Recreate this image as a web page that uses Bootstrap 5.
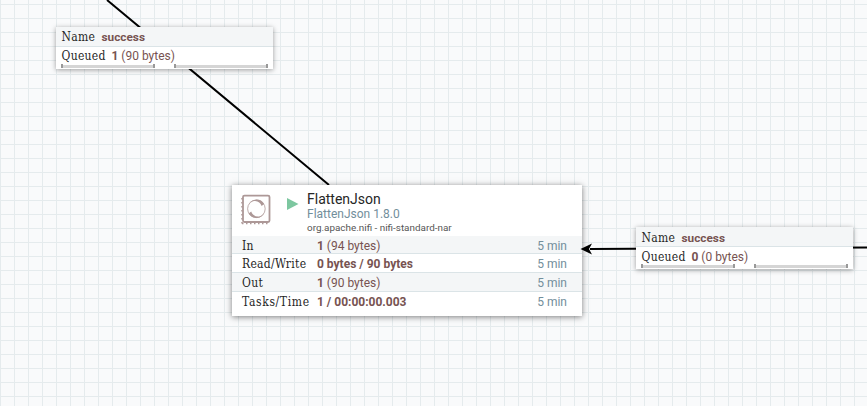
<!DOCTYPE html>
<html lang="en">
<head>
<meta charset="utf-8">
<title>NiFi Flow</title>
<link href="https://cdn.jsdelivr.net/npm/bootstrap@5.3.0/dist/css/bootstrap.min.css" rel="stylesheet">
<style>
body{font-family:Roboto,sans-serif;font-size:12px;line-height:18px;color:#775351}
.flow-canvas{width:867px;height:406px;background-color:#f9fafb;background-image:linear-gradient(90deg,#e5ebed 1px,transparent 1px),linear-gradient(#e5ebed 1px,transparent 1px);background-size:14px 14px;background-position:0 4px}
.wires{left:0;top:0}
.node-box{background:#fff;box-shadow:0 1px 5px rgba(0,0,0,.38)}
.conn{width:217px;height:42px}
.conn-a{left:56px;top:27px}
.conn-b{left:636px;top:227px}
.processor{left:232px;top:185px;width:350px;height:130.5px;box-shadow:0 1px 6px rgba(0,0,0,.5)}
.conn-row{height:20px;padding-left:5.5px;line-height:20px}
.conn-row.shade{border-bottom:1px solid #dbe4e7}
.conn-row.queue{height:17px;line-height:18px}
.conn-label{font-size:11.8px;line-height:21px}
.conn-b .conn-row{line-height:22px}
.conn-b .conn-row.queue{line-height:20px}
.conn-b .conn-label{line-height:23px}
.shade{background:#f4f6f7}
.slab{font-family:"DejaVu Serif",serif;font-stretch:condensed;font-size:12px;letter-spacing:.3px;color:#262626;white-space:nowrap}
.slab-name{width:40px}
.slab-queue{width:50px}
.gauges{padding:0 5px;gap:19px}
.gauge{width:94px;height:4px;border:solid #999;border-width:0 2px;background:linear-gradient(#d5d5d5,#d5d5d5) 0 1px/100% 3px no-repeat}
.proc-head{height:51px}
.proc-icon{margin:9px 0 0 9px}
.run-icon{margin:13px 0 0 14px}
.proc-text{margin:6px 0 0 8px}
.proc-name{font-size:14px;line-height:17px;color:#262626}
.proc-type{line-height:13px;color:#728e9b}
.proc-bundle{font-size:9.9px;line-height:14px;color:#555}
.stat{height:19px;padding:0 15px 0 10px;border-bottom:1px solid #dbe4e7;line-height:20px}
.stat-first{height:18px}
.stat:last-child{border:0}
.stat-mid{line-height:21px}
.stat .slab{width:75px}
.stat .slab-wide{letter-spacing:.65px}
.ago{color:#728e9b}
b{font-weight:700}
</style>
</head>
<body class="m-0 overflow-hidden">
<main class="flow-canvas position-relative overflow-hidden">
<svg class="wires position-absolute" width="867" height="406" fill="none" stroke="#000" stroke-width="2"><path d="M107 0 329 185M867 247.4 590 249"/></svg>

<section class="node-box conn conn-a position-absolute">
<div class="conn-row shade d-flex"><span class="slab slab-name">Name</span><b class="conn-label">success</b></div>
<div class="conn-row queue d-flex"><span class="slab slab-queue">Queued</span><span><b>1</b> (90 bytes)</span></div>
<div class="gauges d-flex"><div class="gauge"></div><div class="gauge"></div></div>
</section>

<section class="node-box conn conn-b position-absolute">
<div class="conn-row shade d-flex"><span class="slab slab-name">Name</span><b class="conn-label">success</b></div>
<div class="conn-row queue d-flex"><span class="slab slab-queue">Queued</span><span><b>0</b> (0 bytes)</span></div>
<div class="gauges d-flex"><div class="gauge"></div><div class="gauge"></div></div>
</section>

<section class="node-box processor position-absolute">
<header class="proc-head d-flex align-items-start">
<svg class="proc-icon" width="32" height="32" fill="none" stroke="#ad9897"><rect x="2" y="1.6" width="26.5" height="26.4" rx="1.5" stroke-width="1.8"/><path d="M1 4v26M1 29.5H28" stroke-width="1.5" stroke-dasharray="1.5 2.5"/><circle cx="15.4" cy="14.8" r="8.8" stroke-width=".8"/><g fill="#ad9897" stroke="none"><path d="M7 11A9.2 9.2 0 0 1 23.2 10L20.600 12A7.400 7.400 0 0 0 7 11Z"/><path d="M23.800 18.600A9.200 9.200 0 0 1 7.600 19.600L10.200 17.600A7.400 7.400 0 0 0 23.800 18.600Z"/></g></svg>
<svg class="run-icon" width="12" height="12"><path d="M0 0 11.5 6 0 12Z" fill="#7dc7a0"/></svg>
<div class="proc-text"><div class="proc-name">FlattenJson</div><div class="proc-type">FlattenJson 1.8.0</div><div class="proc-bundle">org.apache.nifi - nifi-standard-nar</div></div>
</header>
<div class="stat stat-first shade d-flex"><span class="slab">In</span><span><b>1</b> (94 bytes)</span><span class="ago ms-auto">5 min</span></div>
<div class="stat stat-mid d-flex"><span class="slab">Read/Write</span><b>0 bytes / 90 bytes</b><span class="ago ms-auto">5 min</span></div>
<div class="stat stat-mid shade d-flex"><span class="slab">Out</span><span><b>1</b> (90 bytes)</span><span class="ago ms-auto">5 min</span></div>
<div class="stat d-flex"><span class="slab slab-wide">Tasks/Time</span><b>1 / 00:00:00.003</b><span class="ago ms-auto">5 min</span></div>
</section>
<svg class="wires position-absolute" width="867" height="406"><path d="M580.5 249 592 243.5 589 249 592 254.5Z"/></svg>
</main>
<script src="https://cdn.jsdelivr.net/npm/bootstrap@5.3.0/dist/js/bootstrap.bundle.min.js"></script>
</body>
</html>
